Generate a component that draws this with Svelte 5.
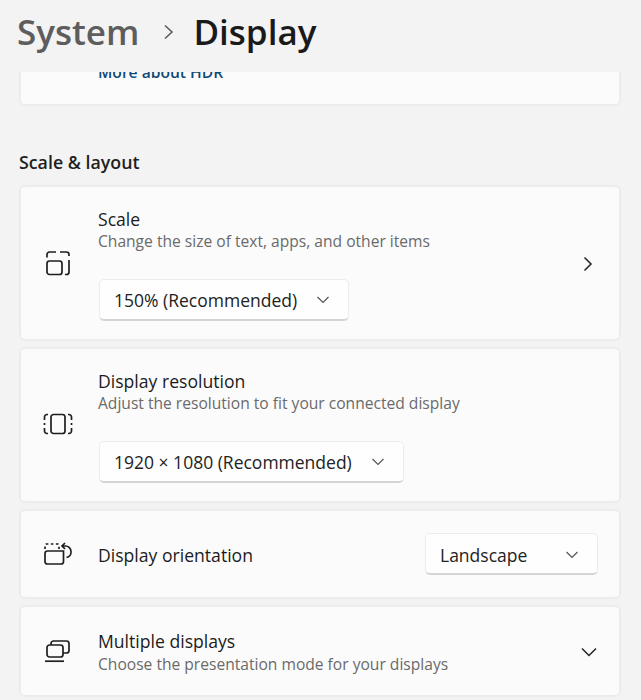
<script>
  let rows = [
    { id: "scale", title: "Scale", sub: "Change the size of text, apps, and other items", select: "150% (Recommended)", width: 250 },
    { id: "res", title: "Display resolution", sub: "Adjust the resolution to fit your connected display", select: "1920 × 1080 (Recommended)", width: 305 }
  ];
</script>

<div class="page">
  <header class="crumb">
    <span class="parent">System</span>
    <svg class="sep" width="14" height="18" viewBox="0 0 14 18"><path d="M3 2.5 10 9 3 15.500" fill="none" stroke="#5c5c5c" stroke-width="1.600" /></svg>
    <span class="current">Display</span>
  </header>

  <div class="scroll">
    <div class="card hdr">
      <a class="link" href="#hdr">More about HDR</a>
    </div>

    <h2>Scale &amp; layout</h2>

    {#each rows as row}
      <div class="card tall">
        <div class="icon">
          {#if row.id === "scale"}
            <svg width="26" height="26" viewBox="0 0 26 26" fill="none" stroke="#1f1f1f" stroke-width="1.700">
              <rect x="2" y="11" width="15" height="13.500" rx="2.500" />
              <path d="M2 7.500V4.500A2.500 2.500 0 0 1 4.500 2H11M15 2h6.500A2.500 2.500 0 0 1 24 4.500V6M24 10v12A2.500 2.500 0 0 1 21.500 24.500H20" />
            </svg>
          {:else}
            <svg width="30" height="24" viewBox="0 0 30 24" fill="none" stroke="#1f1f1f" stroke-width="1.700">
              <rect x="8" y="2.500" width="14" height="19" rx="2.500" />
              <path d="M5 2.500H4A2.500 2.500 0 0 0 1.500 5v3M1.500 11v2M1.500 16v3A2.500 2.500 0 0 0 4 21.500h1M25 2.500h1A2.500 2.500 0 0 1 28.500 5v3M28.500 11v2M28.500 16v3a2.500 2.500 0 0 1-2.500 2.500h-1" />
            </svg>
          {/if}
        </div>
        <div class="body">
          <div class="title">{row.title}</div>
          <div class="sub">{row.sub}</div>
          <button class="select first" style="width: {row.width}px">
            <span>{row.select}</span>
            <svg width="14" height="8" viewBox="0 0 14 8"><path d="M1.500 1 7 6.500 12.500 1" fill="none" stroke="#555" stroke-width="1.200" /></svg>
          </button>
        </div>
        {#if row.id === "scale"}
          <svg class="chev" width="12" height="16" viewBox="0 0 12 16"><path d="M2.500 1.500 9 8 2.500 14.500" fill="none" stroke="#222" stroke-width="1.500" /></svg>
        {/if}
      </div>
    {/each}

    <div class="card orient">
      <div class="icon">
        <svg width="30" height="24" viewBox="0 0 30 24" fill="none" stroke="#1f1f1f" stroke-width="1.700">
          <path d="M2 7V3.500Q2 2 3.500 2H14.500Q16 2 16 3.500V7" stroke-dasharray="2.500 2.500" />
          <path d="M2 11.500Q2 9 4.500 9H20.500V19.500Q20.500 22 18 22H4.500Q2 22 2 19.500Z" />
          <path d="M20 4h2.500a5.500 5.500 0 0 1 5.500 5.500 5.500 5.500 0 0 1-4.500 6M22 1l-3 3 3 3" />
        </svg>
      </div>
      <div class="title grow">Display orientation</div>
      <button class="select land">
        <span>Landscape</span>
        <svg width="14" height="8" viewBox="0 0 14 8"><path d="M1.500 1 7 6.500 12.500 1" fill="none" stroke="#555" stroke-width="1.200" /></svg>
      </button>
    </div>

    <div class="card multi">
      <div class="icon">
        <svg width="28" height="24" viewBox="0 0 28 24" fill="none" stroke="#1f1f1f" stroke-width="1.700">
          <path d="M7 6V4.500A2.500 2.500 0 0 1 9.500 2h13A2.500 2.500 0 0 1 25 4.500v7a2.500 2.500 0 0 1-2.500 2.500H19" />
          <rect x="3" y="6" width="16" height="12" rx="2.500" />
          <path d="M1 22.200h19" />
        </svg>
      </div>
      <div class="body">
        <div class="title">Multiple displays</div>
        <div class="sub">Choose the presentation mode for your displays</div>
      </div>
      <svg class="down" width="16" height="10" viewBox="0 0 16 10"><path d="M1 1.500 8 8.500 15 1.500" fill="none" stroke="#222" stroke-width="1.500" /></svg>
    </div>
  </div>
</div>

<style>
  :global(body) {
    background: #f3f3f3;
    font-family: "Open Sans", "Noto Sans", sans-serif;
    color: #1b1b1b;
    overflow: hidden;
  }

  .page {
    width: 641px;
    height: 700px;
    overflow: hidden;
  }

  .crumb {
    box-sizing: border-box;
    padding: 0 0 0 17px;
    display: flex;
    align-items: center;
    font-size: 35px;
    font-weight: 600;
    line-height: 48px;
    height: 64px;
    margin-bottom: 8px;
  }

  .parent {
    color: #5d5d5d;
  }

  .sep {
    margin: 0 17px 0 23px;
  }

  .current {
    color: #1a1a1a;
  }

  .scroll {
    padding: 0 20px 0 19px;
  }

  .card {
    background: #fbfbfb;
    border: 2px solid #ececec;
    border-radius: 6px;
    box-sizing: border-box;
    display: flex;
    align-items: center;
    margin-bottom: 6px;
  }

  .hdr {
    height: 34px;
    align-items: flex-start;
    border-top: none;
    border-radius: 0 0 6px 6px;
    padding-left: 77px;
    overflow: hidden;
    margin-bottom: 0;
  }

  .link {
    color: #0f4a78;
    font-size: 15.600px;
    font-weight: 600;
    line-height: 20px;
    margin-top: -10px;
    text-decoration: none;
  }

  h2 {
    margin: 43px 0 9px;
    font-size: 17.800px;
    line-height: 27px;
    font-weight: 600;
    color: #1f1f1f;
  }

  .tall {
    height: 156px;
    position: relative;
    align-items: flex-start;
  }

  .icon {
    width: 77px;
    flex: none;
    display: flex;
    justify-content: center;
    padding-right: 4px;
    box-sizing: border-box;
  }

  .tall .icon {
    margin-top: 63px;
  }

  .body {
    flex: 1;
  }

  .tall .body {
    padding-top: 20px;
  }

  .title {
    font-size: 17.600px;
    line-height: 24px;
    color: #1c1c1c;
  }

  .grow {
    flex: 1;
    padding-top: 2px;
  }

  .sub {
    font-size: 15.600px;
    line-height: 20px;
    color: #6a6a6a;
  }

  .select {
    font: inherit;
    font-size: 17.500px;
    color: #222;
    background: #fefefe;
    border: 1px solid #ececec;
    border-bottom: 2px solid #d4d4d4;
    border-radius: 5px;
    height: 42px;
    box-sizing: border-box;
    display: flex;
    align-items: center;
    justify-content: space-between;
    padding: 0 18px 0 14px;
  }

  .first {
    margin: 28px 0 0 1px;
    padding-top: 1px;
  }

  .land {
    width: 173px;
    margin-right: 21px;
    padding-left: 14px;
    padding-top: 2px;
  }

  .chev {
    position: absolute;
    right: 25px;
    top: 69px;
  }

  .orient {
    height: 90px;
  }

  .multi {
    height: 92px;
    padding-right: 22px;
  }

  .multi .body {
    padding-top: 1px;
  }

  .multi .title {
    margin-bottom: 1px;
  }

  .down {
    margin-top: 2px;
  }
</style>
